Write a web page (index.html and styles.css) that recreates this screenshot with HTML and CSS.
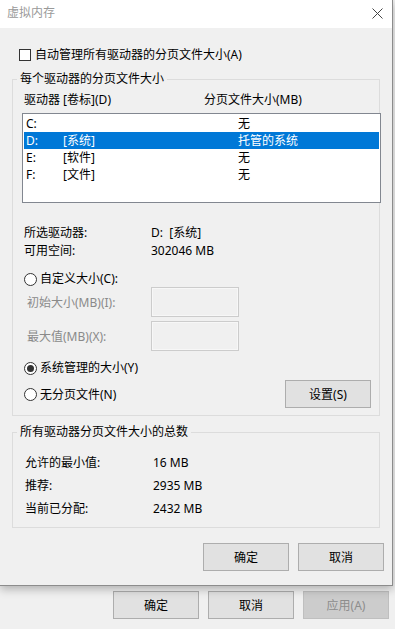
FILE: index.html
```html
<!DOCTYPE html>
<html lang="zh-CN">
<head>
    <meta charset="UTF-8">
    <meta name="viewport" content="width=device-width, initial-scale=1.0">
    <title>虚拟内存</title>
    <link rel="stylesheet" href="styles.css">
</head>
<body>

    <div class="dialog">
        <div class="titlebar">
            <span class="title">虚拟内存</span>
            <svg class="close" width="11" height="11" viewBox="0 0 11 11">
                <path d="M0.5 0.5L10.5 10.5M10.5 0.5L0.5 10.5" stroke="#444" stroke-width="1" fill="none"/>
            </svg>
        </div>

        <div class="content">
            <div class="check-row">
                <span class="checkbox"></span>
                <span>自动管理所有驱动器的分页文件大小(A)</span>
            </div>

            <fieldset class="group group-drives">
                <legend>每个驱动器的分页文件大小</legend>

                <div class="list-head">
                    <span class="head-drive">驱动器 [卷标](D)</span>
                    <span>分页文件大小(MB)</span>
                </div>

                <div class="listbox">
                    <div class="list-row"><span>C:</span><span></span><span>无</span></div>
                    <div class="list-row selected"><span>D:</span><span>[系统]</span><span>托管的系统</span></div>
                    <div class="list-row"><span>E:</span><span>[软件]</span><span>无</span></div>
                    <div class="list-row"><span>F:</span><span>[文件]</span><span>无</span></div>
                </div>

                <div class="info">
                    <div class="info-row"><span class="info-label">所选驱动器:</span><span>D:&nbsp;&nbsp;[系统]</span></div>
                    <div class="info-row"><span class="info-label">可用空间:</span><span>302046 MB</span></div>
                </div>

                <div class="radio-row radio-custom">
                    <span class="radio"></span>
                    <span>自定义大小(C):</span>
                </div>

                <div class="size-row">
                    <span class="size-label">初始大小(MB)(I):</span>
                    <span class="size-box"></span>
                </div>
                <div class="size-row size-row-max">
                    <span class="size-label">最大值(MB)(X):</span>
                    <span class="size-box"></span>
                </div>

                <div class="radio-row radio-system">
                    <span class="radio checked"></span>
                    <span>系统管理的大小(Y)</span>
                </div>

                <div class="last-row">
                    <div class="radio-row">
                        <span class="radio"></span>
                        <span>无分页文件(N)</span>
                    </div>
                    <button class="btn">设置(S)</button>
                </div>
            </fieldset>

            <fieldset class="group group-total">
                <legend>所有驱动器分页文件大小的总数</legend>
                <div class="total-row"><span class="total-label">允许的最小值:</span><span>16 MB</span></div>
                <div class="total-row"><span class="total-label">推荐:</span><span>2935 MB</span></div>
                <div class="total-row"><span class="total-label">当前已分配:</span><span>2432 MB</span></div>
            </fieldset>

            <div class="dialog-buttons">
                <button class="btn">确定</button>
                <button class="btn">取消</button>
            </div>
        </div>
    </div>

    <div class="parent-buttons">
        <button class="btn">确定</button>
        <button class="btn">取消</button>
        <button class="btn disabled">应用(A)</button>
    </div>

</body>
</html>
```

FILE: styles.css
```css
/* Reset */
* {
    margin: 0;
    padding: 0;
    box-sizing: border-box;
}

body {
    width: 395px;
    height: 629px;
    overflow: hidden;
    background-color: #f0f0f0;
    font-family: "Noto Sans", "Noto Sans CJK SC", sans-serif;
    font-size: 12px;
    line-height: 16px;
    color: #000;
}

/* Ventana de diálogo */
.dialog {
    width: 393px;
    border-right: 1px solid #8c8c8c;
    border-bottom: 1px solid #8c8c8c;
    background-color: #f0f0f0;
    box-shadow: 0 3px 9px rgba(0, 0, 0, 0.28);
    position: relative;
}

.titlebar {
    height: 28px;
    background: #fff;
    display: flex;
    align-items: center;
    justify-content: space-between;
    padding: 0 9px 2px 7px;
}

.title {
    color: #999;
}

.close {
    display: block;
    margin-top: 1px;
}

.content {
    height: 557px;
    display: flex;
    flex-direction: column;
}

.check-row {
    display: flex;
    align-items: center;
    height: 16px;
    margin: 19px 0 0 19px;
}

.checkbox {
    width: 12px;
    height: 12px;
    border: 1px solid #333;
    background: #fff;
    margin-right: 4px;
}

/* Grupos */
.group {
    margin: 8px 0 0 12px;
    width: 368px;
    border: 1px solid #dcdcdc;
    padding: 0 0 7px 0;
    min-width: 0;
}

.group legend {
    margin-left: 4px;
    padding: 0 3px;
    line-height: 16px;
}

.list-head {
    display: flex;
    height: 16px;
    margin-top: 5px;
    padding-left: 11px;
}

.head-drive {
    width: 180px;
}

.listbox {
    width: 359px;
    height: 90px;
    margin: 5px 0 0 9px;
    border: 1px solid #828790;
    background: #fff;
    padding: 1px;
}

.list-row {
    display: grid;
    grid-template-columns: 37px 175px 1fr;
    height: 17px;
    line-height: 17px;
    padding-left: 2px;
}

.list-row.selected {
    background: #0078d7;
    color: #fff;
}

.info {
    margin-top: 21px;
    padding-left: 11px;
}

.info-row {
    display: flex;
    height: 18px;
    line-height: 18px;
}

.info-label {
    width: 127px;
}

.radio-row {
    display: flex;
    align-items: center;
    height: 16px;
    padding-left: 11px;
}

.radio {
    width: 13px;
    height: 13px;
    border: 1px solid #333;
    border-radius: 50%;
    background: #fff;
    margin-right: 3px;
    display: flex;
    align-items: center;
    justify-content: center;
}

.radio.checked::after {
    content: "";
    width: 7px;
    height: 7px;
    border-radius: 50%;
    background: #333;
}

.radio-custom {
    margin-top: 11px;
}

.size-row {
    display: flex;
    align-items: center;
    height: 30px;
    padding-left: 14px;
    color: #8a8a8a;
}

.size-row-max {
    margin-top: 4px;
}

.size-label {
    width: 124px;
    padding-top: 2px;
}

.size-box {
    width: 88px;
    height: 30px;
    border: 1px solid #cccccc;
    box-shadow: inset 0 0 0 1px #f7f7f7;
}

.radio-system {
    margin-top: 9px;
}

.last-row {
    display: flex;
    align-items: center;
    justify-content: space-between;
    height: 28px;
    margin-top: 4px;
    padding-right: 8px;
}

.last-row .radio-row {
    padding-top: 1px;
}

/* Botones */
.btn {
    width: 86px;
    height: 28px;
    background: #e1e1e1;
    border: 1px solid #adadad;
    font-family: inherit;
    font-size: 12px;
    color: #000;
}

.btn.disabled {
    background: #cccccc;
    border-color: #bfbfbf;
    color: #8d8d8d;
}

/* Totales */
.group-total .total-row:first-of-type {
    margin-top: 11px;
}

.total-row {
    display: flex;
    align-items: center;
    height: 23px;
    padding-left: 12px;
}

.total-label {
    width: 128px;
}

.dialog-buttons {
    display: flex;
    justify-content: flex-end;
    gap: 9px;
    margin-top: 15px;
    padding-right: 8px;
}

.parent-buttons {
    display: flex;
    justify-content: flex-end;
    gap: 9px;
    margin-top: 5px;
    padding-right: 6px;
}
```
